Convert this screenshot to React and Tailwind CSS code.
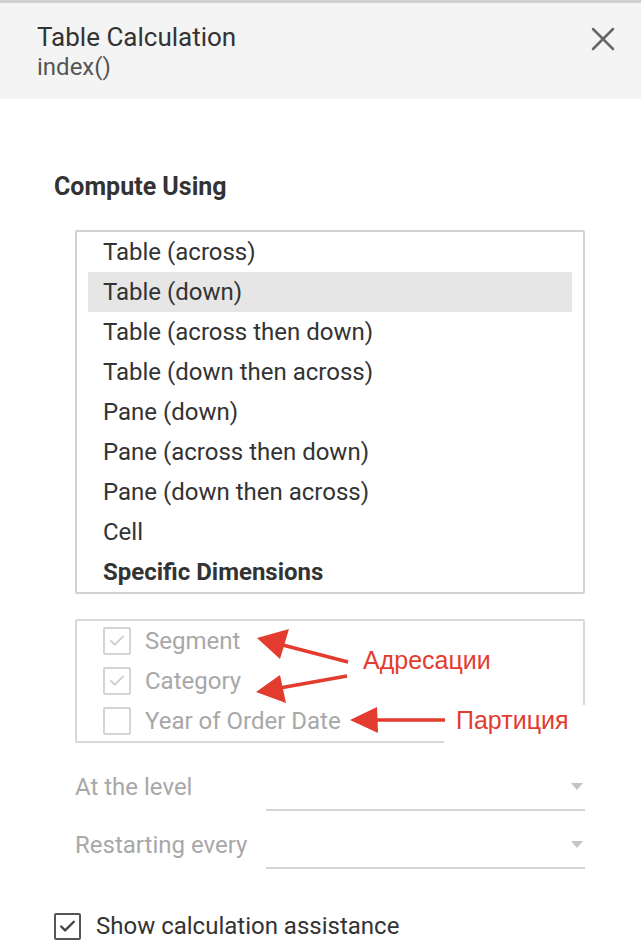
import { Check, X } from "lucide-react";

const ITEMS = [
  "Table (across)",
  "Table (down)",
  "Table (across then down)",
  "Table (down then across)",
  "Pane (down)",
  "Pane (across then down)",
  "Pane (down then across)",
  "Cell",
];

const DIMS = [
  { name: "Segment", checked: true },
  { name: "Category", checked: true },
  { name: "Year of Order Date", checked: false },
];

function Dropdown({ label }) {
  return (
    <div className="flex items-end h-[58px]">
      <div className="w-[191px] pb-[10px] text-[24px] leading-[28px] text-[#a8a8a8]">{label}</div>
      <div className="flex-1 h-[44px] border-b-2 border-[#d4d4d4] flex items-center justify-end pr-[2px] pb-[4px]">
        <svg width="12" height="7" viewBox="0 0 12 7">
          <path d="M0 0h12L6 7z" fill="#c4c4c4" />
        </svg>
      </div>
    </div>
  );
}

export default function App() {
  return (
    <div className="w-[641px] h-[945px] bg-white overflow-hidden font-['Roboto',sans-serif] text-[#333]">

      {/* HEADER */}
      <div className="border-t-[3px] border-[#cfcfcf] bg-[#f4f4f4] h-[99px] flex justify-between pl-[37px] pr-[18px] pt-[18px]">
        <div>
          <div className="text-[26px] leading-[32px] text-[#333]">Table Calculation</div>
          <div className="text-[24px] leading-[28px] text-[#555]">index()</div>
        </div>
        <X className="w-[40px] h-[40px] mt-[-2px] text-[#666]" strokeWidth={1.5} />
      </div>

      <div className="pl-[54px] pr-[56px]">
        <div className="pt-[74px] text-[25px] font-bold leading-[28px]">Compute Using</div>

        {/* COMPUTE USING LIST */}
        <div className="mt-[29px] ml-[21px] border-2 border-[#d2d2d2] rounded-[2px] px-[11px]">
          {ITEMS.map((item, i) => (
            <div
              key={item}
              className={`h-[40px] flex items-center pl-[15px] text-[24px] ${i === 1 ? "bg-[#e6e6e6]" : ""}`}
            >
              {item}
            </div>
          ))}
          <div className="h-[40px] flex items-center pl-[15px] text-[24px] font-bold">Specific Dimensions</div>
        </div>

        {/* DIMENSIONS */}
        <div className="relative mt-[25px] ml-[21px] border-2 border-[#d8d8d8] rounded-[2px] pl-[26px]">
          {DIMS.map((d) => (
            <div key={d.name} className="h-[40px] flex items-center gap-[14px] text-[24px] text-[#a8a8a8]">
              <div className="w-[28px] h-[28px] border-2 border-[#d4d4d4] rounded-[2px] flex items-center justify-center">
                {d.checked && <Check className="w-[18px] h-[18px] text-[#cfcfcf]" strokeWidth={2.5} />}
              </div>
              {d.name}
            </div>
          ))}

          {/* annotation label */}
          <div className="absolute right-[-5px] bottom-[-4px] w-[144px] h-[40px] bg-white pl-[12px] text-[25px] leading-[30px] text-[#e33b2e] font-['Liberation_Sans',sans-serif]">
            Партиция
          </div>
          <div className="absolute left-[286px] top-[24px] text-[25px] leading-[30px] text-[#e33b2e] font-['Liberation_Sans',sans-serif]">
            Адресации
          </div>

          {/* arrows */}
          <svg className="absolute left-[-77px] top-[-621px] pointer-events-none" width="641" height="945">
            <g stroke="#e33b2e" strokeWidth="3.5" fill="none">
              <line x1="348" y1="662" x2="275" y2="643" />
              <line x1="347" y1="676" x2="274" y2="689" />
              <line x1="445" y1="720" x2="368" y2="720" />
            </g>
            <g fill="#e33b2e">
              <polygon points="257,638 289,629 280,659" />
              <polygon points="256,692 280,675 286,703" />
              <polygon points="350,720 377,707 378,733" />
            </g>
          </svg>
        </div>

        {/* LEVEL / RESTART */}
        <div className="mt-[10px] ml-[21px]">
          <Dropdown label="At the level" />
          <Dropdown label="Restarting every" />
        </div>

        {/* SHOW ASSISTANCE */}
        <div className="mt-[43px] flex items-center gap-[15px] text-[24px] leading-[28px]">
          <div className="w-[27px] h-[27px] border-2 border-[#555] rounded-[2px] flex items-center justify-center">
            <Check className="w-[19px] h-[19px] text-[#444]" strokeWidth={3} />
          </div>
          Show calculation assistance
        </div>
      </div>
    </div>
  );
}
